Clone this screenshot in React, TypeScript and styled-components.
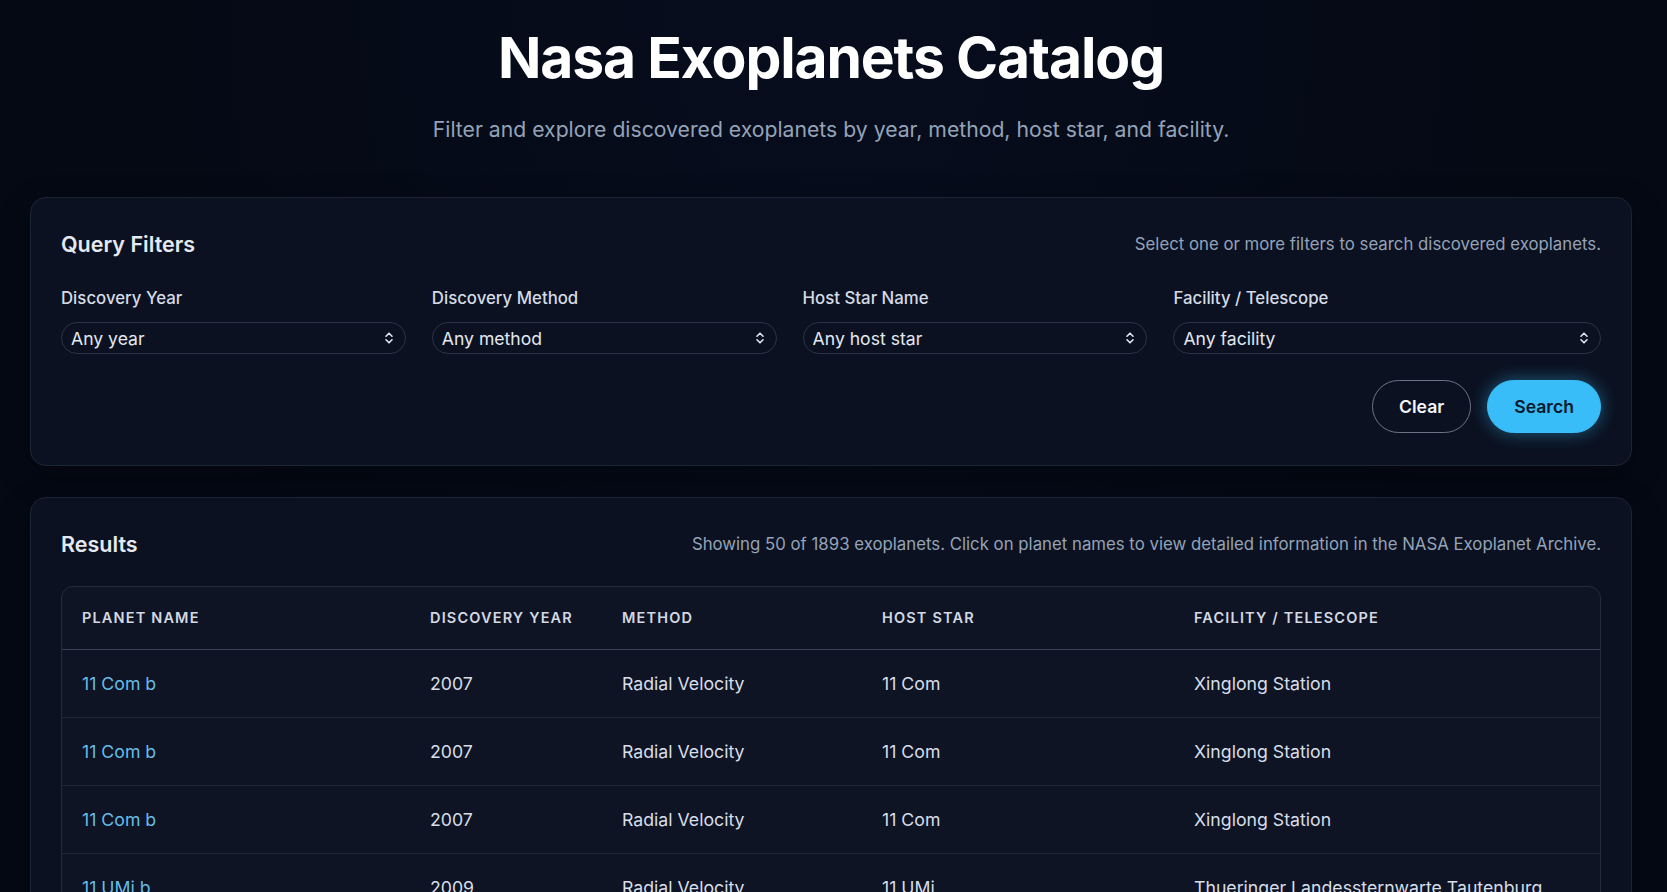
import React, { useState } from 'react';
import styled, { createGlobalStyle } from 'styled-components';

const GlobalStyle = createGlobalStyle`
  * { box-sizing: border-box; }
  body {
    margin: 0;
    background: #040914;
    color: #e2e8f0;
    font-family: Inter, "Noto Sans", "Liberation Sans", sans-serif;
    -webkit-font-smoothing: antialiased;
  }
`;

const filters = [
  { label: 'Discovery Year', placeholder: 'Any year' },
  { label: 'Discovery Method', placeholder: 'Any method' },
  { label: 'Host Star Name', placeholder: 'Any host star' },
  { label: 'Facility / Telescope', placeholder: 'Any facility' },
];

const columns = [
  { title: 'Planet Name', width: 348 },
  { title: 'Discovery Year', width: 192 },
  { title: 'Method', width: 260 },
  { title: 'Host Star', width: 312 },
  { title: 'Facility / Telescope', width: 427 },
];

const rows = [
  ['11 Com b', '2007', 'Radial Velocity', '11 Com', 'Xinglong Station'],
  ['11 Com b', '2007', 'Radial Velocity', '11 Com', 'Xinglong Station'],
  ['11 Com b', '2007', 'Radial Velocity', '11 Com', 'Xinglong Station'],
  ['11 UMi b', '2009', 'Radial Velocity', '11 UMi', 'Thueringer Landessternwarte Tautenburg'],
  ['14 And b', '2008', 'Radial Velocity', '14 And', 'Okayama Astrophysical Observatory'],
];

const UpDown = () => (
  <svg width="10" height="14" viewBox="0 0 10 14" fill="none">
    <path d="M2 5.2 L5 2.2 L8 5.2" stroke="#e2e8f0" strokeWidth="1.6" strokeLinecap="round" strokeLinejoin="round" />
    <path d="M2 8.8 L5 11.8 L8 8.8" stroke="#e2e8f0" strokeWidth="1.6" strokeLinecap="round" strokeLinejoin="round" />
  </svg>
);

const App = () => {
  const [values, setValues] = useState(['', '', '', '']);

  const handleChange = (index: number, value: string) => {
    const next = [...values];
    next[index] = value;
    setValues(next);
  };

  return (
    <Page>
      <GlobalStyle />
      <Header>
        <Title>Nasa Exoplanets Catalog</Title>
        <Subtitle>
          Filter and explore discovered exoplanets by year, method, host star, and facility.
        </Subtitle>
      </Header>

      <Card>
        <CardHeader>
          <CardTitle>Query Filters</CardTitle>
          <CardNote>Select one or more filters to search discovered exoplanets.</CardNote>
        </CardHeader>

        <FilterGrid>
          {filters.map((f, i) => (
            <Field key={f.label}>
              <Label>{f.label}</Label>
              <SelectWrap>
                <Select value={values[i]} onChange={(e) => handleChange(i, e.target.value)}>
                  <option value="">{f.placeholder}</option>
                </Select>
                <Chevron>
                  <UpDown />
                </Chevron>
              </SelectWrap>
            </Field>
          ))}
        </FilterGrid>

        <Actions>
          <GhostButton type="button">Clear</GhostButton>
          <PrimaryButton type="button">Search</PrimaryButton>
        </Actions>
      </Card>

      <Card>
        <CardHeader>
          <CardTitle>Results</CardTitle>
          <CardNote>
            Showing 50 of 1893 exoplanets. Click on planet names to view detailed information in the
            NASA Exoplanet Archive.
          </CardNote>
        </CardHeader>

        <TableFrame>
          <Table>
            <colgroup>
              {columns.map((c) => (
                <col key={c.title} style={{ width: c.width }} />
              ))}
            </colgroup>
            <thead>
              <tr>
                {columns.map((c) => (
                  <Th key={c.title}>{c.title}</Th>
                ))}
              </tr>
            </thead>
            <tbody>
              {rows.map((r, i) => (
                <Tr key={i}>
                  <Td>
                    <PlanetLink href="#">{r[0]}</PlanetLink>
                  </Td>
                  <Td>{r[1]}</Td>
                  <Td>{r[2]}</Td>
                  <Td>{r[3]}</Td>
                  <Td>{r[4]}</Td>
                </Tr>
              ))}
            </tbody>
          </Table>
        </TableFrame>
      </Card>
    </Page>
  );
};

const Page = styled.div`
  min-height: 100vh;
  padding: 22px 35px 40px 30px;
  display: flex;
  flex-direction: column;
  gap: 31px;
  background: radial-gradient(ellipse at 50% 0%, #070d1d 0%, #040914 60%);
`;

const Header = styled.header`
  display: flex;
  flex-direction: column;
  align-items: center;
  gap: 21px;
  margin-bottom: 23px;
`;

const Title = styled.h1`
  margin: 0;
  font-size: 57px;
  line-height: 72px;
  font-weight: 700;
  letter-spacing: -0.02em;
  color: #ffffff;
`;

const Subtitle = styled.p`
  margin: 0;
  font-size: 21.2px;
  line-height: 28px;
  color: #94a3b8;
`;

const Card = styled.section`
  background: #0b1120;
  border: 1px solid #1c2536;
  border-radius: 16px;
  padding: 32px 30px;
  box-shadow: 0 10px 30px rgba(0, 0, 0, 0.35);
`;

const CardHeader = styled.div`
  display: flex;
  justify-content: space-between;
  align-items: center;
  margin-bottom: 28px;
`;

const CardTitle = styled.h2`
  margin: 0;
  font-size: 21.5px;
  line-height: 28px;
  font-weight: 600;
  color: #e5e9f0;
`;

const CardNote = styled.p`
  margin: 0;
  font-size: 16.8px;
  line-height: 22px;
  color: #94a3b8;
`;

const FilterGrid = styled.div`
  display: grid;
  grid-template-columns: 1fr 1fr 1fr 1.24fr;
  gap: 26px;
`;

const Field = styled.label`
  display: flex;
  flex-direction: column;
  gap: 12px;
`;

const Label = styled.span`
  font-size: 16.8px;
  line-height: 24px;
  font-weight: 500;
  color: #d5dbe4;
`;

const SelectWrap = styled.div`
  position: relative;
`;

const Select = styled.select`
  appearance: none;
  -webkit-appearance: none;
  width: 100%;
  height: 32px;
  padding: 0 36px 0 9px;
  border: 1px solid #2a3446;
  border-radius: 999px;
  background: #0b1120;
  color: #e2e8f0;
  font-family: inherit;
  font-size: 17.6px;
  outline: none;
`;

const Chevron = styled.span`
  position: absolute;
  right: 12px;
  top: 50%;
  transform: translateY(-50%);
  display: flex;
  pointer-events: none;
`;

const Actions = styled.div`
  display: flex;
  justify-content: flex-end;
  gap: 16px;
  margin-top: 26px;
`;

const ButtonBase = styled.button`
  height: 53px;
  padding: 0 26px;
  border-radius: 999px;
  font-family: inherit;
  font-size: 17.6px;
  font-weight: 600;
  cursor: pointer;
`;

const GhostButton = styled(ButtonBase)`
  background: transparent;
  border: 1px solid #6b7587;
  color: #f1f5f9;
`;

const PrimaryButton = styled(ButtonBase)`
  background: #38bdf8;
  border: 1px solid #38bdf8;
  color: #0b1a2c;
  box-shadow: 0 0 18px rgba(56, 189, 248, 0.45);
`;

const TableFrame = styled.div`
  border: 1px solid #222c3d;
  border-radius: 12px;
  overflow: hidden;
  background: #0e1424;
`;

const Table = styled.table`
  width: 100%;
  border-collapse: collapse;
  table-layout: fixed;
`;

const Th = styled.th`
  text-align: left;
  padding: 21px 20px;
  font-size: 14.5px;
  line-height: 20px;
  font-weight: 600;
  letter-spacing: 0.08em;
  text-transform: uppercase;
  color: #d3d9e2;
  border-bottom: 1px solid #384357;
`;

const Tr = styled.tr`
  & + & td {
    border-top: 1px solid #1d2636;
  }
`;

const Td = styled.td`
  padding: 22px 20px;
  font-size: 17.7px;
  line-height: 23px;
  color: #d8dee8;
  white-space: nowrap;
`;

const PlanetLink = styled.a`
  color: #66bde8;
  text-decoration: none;
`;

export default App;
